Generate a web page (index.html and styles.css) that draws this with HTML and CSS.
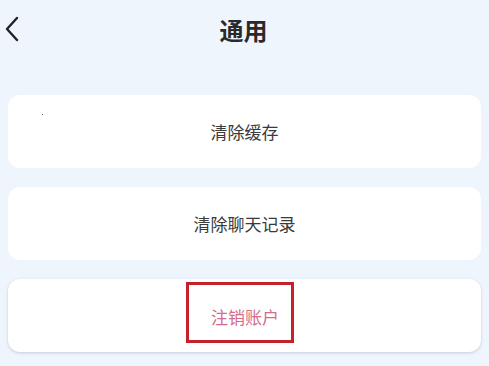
FILE: index.html
```html
<!DOCTYPE html>
<html lang="zh">
<head>
<meta charset="utf-8">
<link rel="stylesheet" href="styles.css">
</head>
<body>
<div class="page">
  <header class="nav">
    <svg class="back" width="16" height="26" viewBox="0 0 16 26"><path d="M13 2 L3 13 L13 24" fill="none" stroke="#222" stroke-width="2.4" stroke-linecap="round" stroke-linejoin="round"/></svg>
    <h1 class="title">通用</h1>
  </header>
  <div class="list">
    <div class="card"><span class="dot"></span><span class="label">清除缓存</span></div>
    <div class="card"><span class="label">清除聊天记录</span></div>
    <div class="card card-last">
      <span class="mark"><span class="label danger">注销账户</span></span>
    </div>
  </div>
</div>
</body>
</html>
```
FILE: styles.css
```css
html, body {
  margin: 0;
  padding: 0;
}
body {
  background: #eff5fd;
  font-family: "Noto Sans CJK SC", "Noto Sans", sans-serif;
  width: 489px;
  height: 366px;
  overflow: hidden;
}
.page {
  display: flex;
  flex-direction: column;
}
.nav {
  position: relative;
  height: 60px;
  display: flex;
  align-items: center;
  justify-content: center;
}
.back {
  position: absolute;
  left: 4px;
  top: 16px;
}
.title {
  margin: 0;
  font-size: 24px;
  font-weight: 700;
  color: #2a2a2a;
  line-height: 1;
  margin-left: -2px;
}
.list {
  display: flex;
  flex-direction: column;
  gap: 19px;
  padding: 35px 8px 0 8px;
}
.card {
  position: relative;
  height: 73px;
  background: #ffffff;
  border-radius: 12px;
  display: flex;
  align-items: center;
  justify-content: center;
}
.card-last {
  box-shadow: 0 1px 3px rgba(120, 130, 150, 0.35);
}
.label {
  font-size: 17px;
  color: #3a3a3a;
  line-height: 1;
}
.danger {
  color: #d46c8c;
}
.mark {
  box-sizing: border-box;
  width: 108px;
  height: 61px;
  border: 3px solid #c3222a;
  display: flex;
  align-items: center;
  justify-content: flex-start;
  padding-left: 22px;
  padding-top: 8px;
  margin-left: -9px;
  align-self: flex-start;
  margin-top: 3px;
}
.dot {
  position: absolute;
  left: 34px;
  top: 19px;
  width: 1px;
  height: 1px;
  background: #666;
}
```
